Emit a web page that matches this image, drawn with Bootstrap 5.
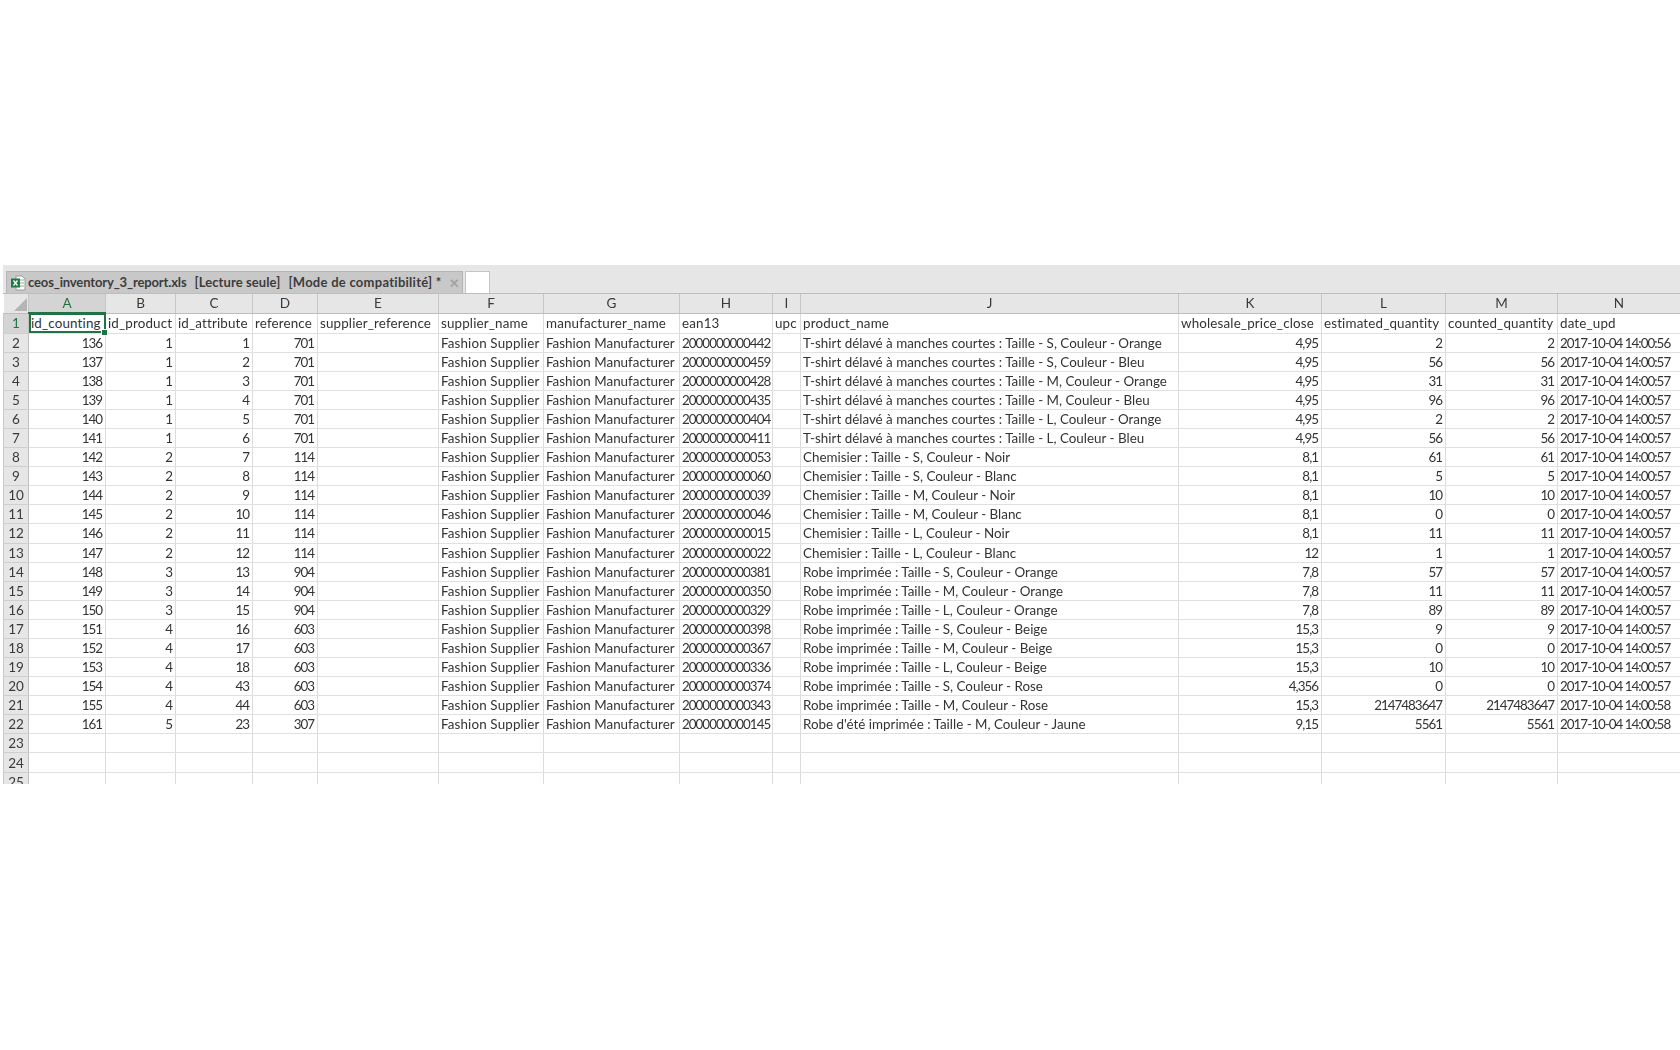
<!DOCTYPE html>
<html lang="fr">
<head>
<meta charset="utf-8">
<title>ceos_inventory_3_report.xls</title>
<link href="https://cdn.jsdelivr.net/npm/bootstrap@5.3.0/dist/css/bootstrap.min.css" rel="stylesheet">
<style>
body{background:#fff;font-family:Lato,"Liberation Sans",sans-serif}
.sheet{margin:265px 0 0 3px;height:519px;overflow:hidden;filter:blur(.35px)}
.tabband{height:29px;background:#e6e6e6;padding:6px 0 0 3px;border-bottom:1px solid #bdbdbd}
.filetab{width:457px;height:22px;background:#c8c8c8;border:1px solid #b4b4b4;border-bottom:0;color:#3c3c3c;font-weight:700;font-size:13px;letter-spacing:-.14px;white-space:pre;padding-left:3px}
.fileicon{width:16px;height:16px;margin-right:2px}
.tabflag{margin-left:8px;letter-spacing:.1px}
.tabflag2{margin-left:8px;letter-spacing:.27px}
.closex{margin-left:auto;margin-right:3px;color:#a0a0a0;font-size:17px;line-height:1;font-weight:700}
.newtab{width:25px;height:22px;margin-left:2px;background:#fff;border:1px solid #c4c4c4;border-bottom:0}
.xl.table{table-layout:fixed;width:1677px;margin:0;font-size:13.4px;line-height:18px;color:#333;border-collapse:collapse}
.xl.table>:not(caption)>*>*{padding:0 2px;height:19.05px;border:0;border-right:1px solid #dcdcdc;border-bottom:1px solid #e0e0e0;background:#fff;color:#333;white-space:nowrap;overflow:hidden;box-shadow:none;vertical-align:middle}
.xl.table>tbody>tr>td:not(.text-start){letter-spacing:-.98px;padding-right:3px}
.xl.table>tbody>tr>td:last-child{text-align:left}
.xl.table>tbody>tr>td:nth-child(7){letter-spacing:.14px}
.xl.table>tbody>tr:first-child>td{letter-spacing:.15px}
.xl.table>tbody>tr:first-child>*,.xl.table>tbody>tr:nth-child(12)>*{height:20px}
.xl.table>thead>tr>th{height:19px;background:#e6e6e6;font-weight:400;text-align:center;color:#3a3a3a;border-right:1px solid #c6c6c6;border-bottom:1px solid #bdbdbd;font-size:13.5px}
.xl.table>thead>tr>th.colon{background:#d4d4d4;color:#217346;border-bottom:2px solid #217346}
.xl.table>tbody>tr>th{background:#e6e6e6;font-weight:400;text-align:center;color:#3a3a3a;border-right:1px solid #c0c0c0;border-left:1px solid #c8c8c8;border-bottom:1px solid #cfcfcf;font-size:13.5px;padding:0}
.xl.table>tbody>tr>th.rowon{background:#d4d4d4;color:#217346}
.xl.table>tbody>tr>td.activecell{position:relative;overflow:visible;outline:2px solid #217346;outline-offset:-2px;z-index:1}
.fillhandle{position:absolute;right:-3px;bottom:-3px;width:5px;height:5px;background:#217346;border:1px solid #fff;box-sizing:content-box}
.corner{display:block;margin:3px 0 0 auto}
.xl.table>thead>tr>th.cornercell{padding:0 1px 0 0}
</style>
</head>
<body>
<main class="sheet">
  <div class="tabband d-flex align-items-start">
    <div class="filetab d-flex align-items-center">
      <svg class="fileicon flex-shrink-0" viewBox="0 0 16 16"><path d="M6 1h6l3 3v11H6z" fill="#fff" stroke="#9a9a9a"/><path d="M9 5h5M9 8h5M9 11h5" stroke="#7fb08f"/><rect x="1" y="3.500" width="9" height="9" fill="#1f7a45"/><path d="M3.500 5.500l4 5M7.500 5.500l-4 5" stroke="#fff" stroke-width="1.300"/></svg>
      <span>ceos_inventory_3_report.xls</span><span class="tabflag">[Lecture seule]</span><span class="tabflag2">[Mode de compatibilité] *</span>
      <span class="closex">×</span>
    </div>
    <div class="newtab"></div>
  </div>
  <table class="table xl">
    <colgroup><col style="width:25px"><col style="width:77px"><col style="width:70px"><col style="width:77px"><col style="width:65px"><col style="width:121px"><col style="width:105px"><col style="width:136px"><col style="width:93px"><col style="width:28px"><col style="width:378px"><col style="width:143px"><col style="width:124px"><col style="width:112px"><col style="width:123px"></colgroup>
    <thead><tr><th class="cornercell"><svg class="corner" width="13" height="13" viewBox="0 0 13 13"><path d="M13 0v13H0z" fill="#b5b5b5"/></svg></th><th class="colon">A</th><th>B</th><th>C</th><th>D</th><th>E</th><th>F</th><th>G</th><th>H</th><th>I</th><th>J</th><th>K</th><th>L</th><th>M</th><th>N</th></tr></thead>
    <tbody class="text-end">
<tr><th class="rowon">1</th><td class="activecell text-start">id_counting<span class="fillhandle"></span></td><td class="text-start">id_product</td><td class="text-start">id_attribute</td><td class="text-start">reference</td><td class="text-start">supplier_reference</td><td class="text-start">supplier_name</td><td class="text-start">manufacturer_name</td><td class="text-start">ean13</td><td class="text-start">upc</td><td class="text-start">product_name</td><td class="text-start">wholesale_price_close</td><td class="text-start">estimated_quantity</td><td class="text-start">counted_quantity</td><td class="text-start">date_upd</td></tr>
<tr><th>2</th><td>136</td><td>1</td><td>1</td><td>701</td><td></td><td class="text-start">Fashion Supplier</td><td class="text-start">Fashion Manufacturer</td><td>2000000000442</td><td></td><td class="text-start">T-shirt délavé à manches courtes : Taille - S, Couleur - Orange</td><td>4,95</td><td>2</td><td>2</td><td>2017-10-04 14:00:56</td></tr>
<tr><th>3</th><td>137</td><td>1</td><td>2</td><td>701</td><td></td><td class="text-start">Fashion Supplier</td><td class="text-start">Fashion Manufacturer</td><td>2000000000459</td><td></td><td class="text-start">T-shirt délavé à manches courtes : Taille - S, Couleur - Bleu</td><td>4,95</td><td>56</td><td>56</td><td>2017-10-04 14:00:57</td></tr>
<tr><th>4</th><td>138</td><td>1</td><td>3</td><td>701</td><td></td><td class="text-start">Fashion Supplier</td><td class="text-start">Fashion Manufacturer</td><td>2000000000428</td><td></td><td class="text-start">T-shirt délavé à manches courtes : Taille - M, Couleur - Orange</td><td>4,95</td><td>31</td><td>31</td><td>2017-10-04 14:00:57</td></tr>
<tr><th>5</th><td>139</td><td>1</td><td>4</td><td>701</td><td></td><td class="text-start">Fashion Supplier</td><td class="text-start">Fashion Manufacturer</td><td>2000000000435</td><td></td><td class="text-start">T-shirt délavé à manches courtes : Taille - M, Couleur - Bleu</td><td>4,95</td><td>96</td><td>96</td><td>2017-10-04 14:00:57</td></tr>
<tr><th>6</th><td>140</td><td>1</td><td>5</td><td>701</td><td></td><td class="text-start">Fashion Supplier</td><td class="text-start">Fashion Manufacturer</td><td>2000000000404</td><td></td><td class="text-start">T-shirt délavé à manches courtes : Taille - L, Couleur - Orange</td><td>4,95</td><td>2</td><td>2</td><td>2017-10-04 14:00:57</td></tr>
<tr><th>7</th><td>141</td><td>1</td><td>6</td><td>701</td><td></td><td class="text-start">Fashion Supplier</td><td class="text-start">Fashion Manufacturer</td><td>2000000000411</td><td></td><td class="text-start">T-shirt délavé à manches courtes : Taille - L, Couleur - Bleu</td><td>4,95</td><td>56</td><td>56</td><td>2017-10-04 14:00:57</td></tr>
<tr><th>8</th><td>142</td><td>2</td><td>7</td><td>114</td><td></td><td class="text-start">Fashion Supplier</td><td class="text-start">Fashion Manufacturer</td><td>2000000000053</td><td></td><td class="text-start">Chemisier : Taille - S, Couleur - Noir</td><td>8,1</td><td>61</td><td>61</td><td>2017-10-04 14:00:57</td></tr>
<tr><th>9</th><td>143</td><td>2</td><td>8</td><td>114</td><td></td><td class="text-start">Fashion Supplier</td><td class="text-start">Fashion Manufacturer</td><td>2000000000060</td><td></td><td class="text-start">Chemisier : Taille - S, Couleur - Blanc</td><td>8,1</td><td>5</td><td>5</td><td>2017-10-04 14:00:57</td></tr>
<tr><th>10</th><td>144</td><td>2</td><td>9</td><td>114</td><td></td><td class="text-start">Fashion Supplier</td><td class="text-start">Fashion Manufacturer</td><td>2000000000039</td><td></td><td class="text-start">Chemisier : Taille - M, Couleur - Noir</td><td>8,1</td><td>10</td><td>10</td><td>2017-10-04 14:00:57</td></tr>
<tr><th>11</th><td>145</td><td>2</td><td>10</td><td>114</td><td></td><td class="text-start">Fashion Supplier</td><td class="text-start">Fashion Manufacturer</td><td>2000000000046</td><td></td><td class="text-start">Chemisier : Taille - M, Couleur - Blanc</td><td>8,1</td><td>0</td><td>0</td><td>2017-10-04 14:00:57</td></tr>
<tr><th>12</th><td>146</td><td>2</td><td>11</td><td>114</td><td></td><td class="text-start">Fashion Supplier</td><td class="text-start">Fashion Manufacturer</td><td>2000000000015</td><td></td><td class="text-start">Chemisier : Taille - L, Couleur - Noir</td><td>8,1</td><td>11</td><td>11</td><td>2017-10-04 14:00:57</td></tr>
<tr><th>13</th><td>147</td><td>2</td><td>12</td><td>114</td><td></td><td class="text-start">Fashion Supplier</td><td class="text-start">Fashion Manufacturer</td><td>2000000000022</td><td></td><td class="text-start">Chemisier : Taille - L, Couleur - Blanc</td><td>12</td><td>1</td><td>1</td><td>2017-10-04 14:00:57</td></tr>
<tr><th>14</th><td>148</td><td>3</td><td>13</td><td>904</td><td></td><td class="text-start">Fashion Supplier</td><td class="text-start">Fashion Manufacturer</td><td>2000000000381</td><td></td><td class="text-start">Robe imprimée : Taille - S, Couleur - Orange</td><td>7,8</td><td>57</td><td>57</td><td>2017-10-04 14:00:57</td></tr>
<tr><th>15</th><td>149</td><td>3</td><td>14</td><td>904</td><td></td><td class="text-start">Fashion Supplier</td><td class="text-start">Fashion Manufacturer</td><td>2000000000350</td><td></td><td class="text-start">Robe imprimée : Taille - M, Couleur - Orange</td><td>7,8</td><td>11</td><td>11</td><td>2017-10-04 14:00:57</td></tr>
<tr><th>16</th><td>150</td><td>3</td><td>15</td><td>904</td><td></td><td class="text-start">Fashion Supplier</td><td class="text-start">Fashion Manufacturer</td><td>2000000000329</td><td></td><td class="text-start">Robe imprimée : Taille - L, Couleur - Orange</td><td>7,8</td><td>89</td><td>89</td><td>2017-10-04 14:00:57</td></tr>
<tr><th>17</th><td>151</td><td>4</td><td>16</td><td>603</td><td></td><td class="text-start">Fashion Supplier</td><td class="text-start">Fashion Manufacturer</td><td>2000000000398</td><td></td><td class="text-start">Robe imprimée : Taille - S, Couleur - Beige</td><td>15,3</td><td>9</td><td>9</td><td>2017-10-04 14:00:57</td></tr>
<tr><th>18</th><td>152</td><td>4</td><td>17</td><td>603</td><td></td><td class="text-start">Fashion Supplier</td><td class="text-start">Fashion Manufacturer</td><td>2000000000367</td><td></td><td class="text-start">Robe imprimée : Taille - M, Couleur - Beige</td><td>15,3</td><td>0</td><td>0</td><td>2017-10-04 14:00:57</td></tr>
<tr><th>19</th><td>153</td><td>4</td><td>18</td><td>603</td><td></td><td class="text-start">Fashion Supplier</td><td class="text-start">Fashion Manufacturer</td><td>2000000000336</td><td></td><td class="text-start">Robe imprimée : Taille - L, Couleur - Beige</td><td>15,3</td><td>10</td><td>10</td><td>2017-10-04 14:00:57</td></tr>
<tr><th>20</th><td>154</td><td>4</td><td>43</td><td>603</td><td></td><td class="text-start">Fashion Supplier</td><td class="text-start">Fashion Manufacturer</td><td>2000000000374</td><td></td><td class="text-start">Robe imprimée : Taille - S, Couleur - Rose</td><td>4,356</td><td>0</td><td>0</td><td>2017-10-04 14:00:57</td></tr>
<tr><th>21</th><td>155</td><td>4</td><td>44</td><td>603</td><td></td><td class="text-start">Fashion Supplier</td><td class="text-start">Fashion Manufacturer</td><td>2000000000343</td><td></td><td class="text-start">Robe imprimée : Taille - M, Couleur - Rose</td><td>15,3</td><td>2147483647</td><td>2147483647</td><td>2017-10-04 14:00:58</td></tr>
<tr><th>22</th><td>161</td><td>5</td><td>23</td><td>307</td><td></td><td class="text-start">Fashion Supplier</td><td class="text-start">Fashion Manufacturer</td><td>2000000000145</td><td></td><td class="text-start">Robe d'été imprimée : Taille - M, Couleur - Jaune</td><td>9,15</td><td>5561</td><td>5561</td><td>2017-10-04 14:00:58</td></tr>
<tr><th>23</th><td></td><td></td><td></td><td></td><td></td><td></td><td></td><td></td><td></td><td></td><td></td><td></td><td></td><td></td></tr>
<tr><th>24</th><td></td><td></td><td></td><td></td><td></td><td></td><td></td><td></td><td></td><td></td><td></td><td></td><td></td><td></td></tr>
<tr><th>25</th><td></td><td></td><td></td><td></td><td></td><td></td><td></td><td></td><td></td><td></td><td></td><td></td><td></td><td></td></tr>
    </tbody>
  </table>
</main>
<script src="https://cdn.jsdelivr.net/npm/bootstrap@5.3.0/dist/js/bootstrap.bundle.min.js"></script>
</body>
</html>
